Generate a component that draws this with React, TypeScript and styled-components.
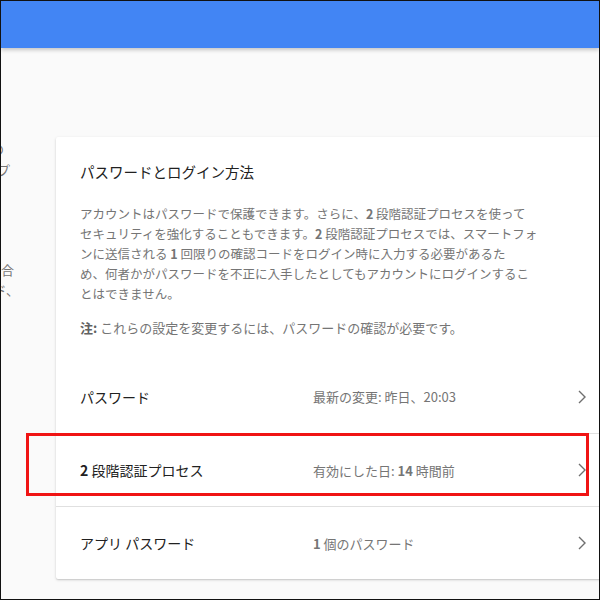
import React from "react";
import styled, { createGlobalStyle } from "styled-components";

const GlobalStyle = createGlobalStyle`
  html, body {
    margin: 0;
    padding: 0;
    background: #fafafa;
  }
  body {
    font-family: "Noto Sans CJK JP", "Noto Sans", sans-serif;
    -webkit-font-smoothing: antialiased;
  }
`;

const Frame = styled.div`
  position: relative;
  width: 600px;
  height: 600px;
  box-sizing: border-box;
  border: 1px solid #111;
  background: #fafafa;
  overflow: hidden;
  display: flex;
  flex-direction: column;
`;

const Header = styled.header`
  flex: 0 0 47px;
  background: #4285f4;
  box-shadow: 0 2px 4px rgba(0, 0, 0, 0.22);
  position: relative;
  z-index: 2;
`;

const Main = styled.main`
  display: flex;
  align-items: flex-start;
  padding-top: 89px;
`;

const Aside = styled.aside`
  flex: 0 0 55px;
  padding-top: 2px;
  overflow: hidden;
  color: #757575;
  font-size: 13px;
  line-height: 20px;
`;

const SideLine = styled.div<{ $end: number; $gap?: number }>`
  display: flex;
  justify-content: flex-end;
  white-space: nowrap;
  padding-right: ${({ $end }) => 56 - $end}px;
  margin-top: ${({ $gap }) => $gap ?? 0}px;
`;

const Card = styled.section`
  flex: 0 0 564px;
  background: #fff;
  border-radius: 2px;
  box-shadow: 0 1px 3px rgba(0, 0, 0, 0.16), 0 1px 1px rgba(0, 0, 0, 0.08);
`;

const CardHead = styled.div`
  padding: 23px 24px 22px;
`;

const Title = styled.h2`
  margin: 0;
  font-size: 14.5px;
  font-weight: 400;
  line-height: 24px;
  color: #212121;
`;

const Description = styled.p`
  margin: 20px 0 0;
  font-size: 12.5px;
  line-height: 20px;
  color: #757575;
  white-space: nowrap;
`;

const Note = styled(Description)`
  margin-top: 14px;
  font-size: 13px;
`;

const Strong = styled.b`
  font-weight: 700;
  color: #616161;
`;

const Num = styled.span`
  font-weight: 700;
`;

const Row = styled.div<{ $divider?: boolean }>`
  display: grid;
  grid-template-columns: 233px 1fr 24px;
  align-items: center;
  height: 73px;
  box-sizing: border-box;
  padding: 0 26px 0 24px;
  border-top: ${({ $divider }) => ($divider ? "1px solid #e0e0e0" : "none")};
`;

const Label = styled.div`
  font-size: 14px;
  color: #212121;
  white-space: nowrap;
`;

const Value = styled.div`
  font-size: 13px;
  color: #757575;
  white-space: nowrap;
`;

const Chevron = () => (
  <svg width="24" height="24" viewBox="0 0 24 24" fill="none">
    <polyline points="9,6 15,12 9,18" stroke="#6f6f6f" strokeWidth="1.4" />
  </svg>
);

const Highlight = styled.div`
  position: absolute;
  left: 25px;
  top: 432px;
  width: 563px;
  height: 63px;
  box-sizing: border-box;
  border: 3px solid #f01414;
  z-index: 3;
  pointer-events: none;
`;

const rows = [
  { label: "パスワード", value: "最新の変更: 昨日、20:03" },
  {
    label: (
      <>
        <Num>2</Num> 段階認証プロセス
      </>
    ),
    value: (
      <>
        有効にした日: <Num>14</Num> 時間前
      </>
    ),
  },
  {
    label: "アプリ パスワード",
    value: (
      <>
        <Num>1</Num> 個のパスワード
      </>
    ),
  },
];

export default function App() {
  return (
    <>
      <GlobalStyle />
      <Frame>
        <Header />
        <Main>
          <Aside>
            <SideLine $end={4}>ログインの</SideLine>
            <SideLine $end={10} $gap={1}>ヘルプ</SideLine>
            <SideLine $end={14} $gap={80}>場合</SideLine>
            <SideLine $end={19}>パスワード、</SideLine>
          </Aside>
          <Card>
            <CardHead>
              <Title>パスワードとログイン方法</Title>
              <Description>
                アカウントはパスワードで保護できます。さらに、<Num>2</Num> 段階認証プロセスを使って
                <br />
                セキュリティを強化することもできます。<Num>2</Num> 段階認証プロセスでは、スマートフォ
                <br />
                ンに送信される <Num>1</Num> 回限りの確認コードをログイン時に入力する必要があるた
                <br />
                め、何者かがパスワードを不正に入手したとしてもアカウントにログインするこ
                <br />
                とはできません。
              </Description>
              <Note>
                <Strong>注:</Strong> これらの設定を変更するには、パスワードの確認が必要です。
              </Note>
            </CardHead>
            {rows.map((row, i) => (
              <Row key={i} $divider={i > 0}>
                <Label>{row.label}</Label>
                <Value>{row.value}</Value>
                <Chevron />
              </Row>
            ))}
          </Card>
        </Main>
        <Highlight />
      </Frame>
    </>
  );
}
